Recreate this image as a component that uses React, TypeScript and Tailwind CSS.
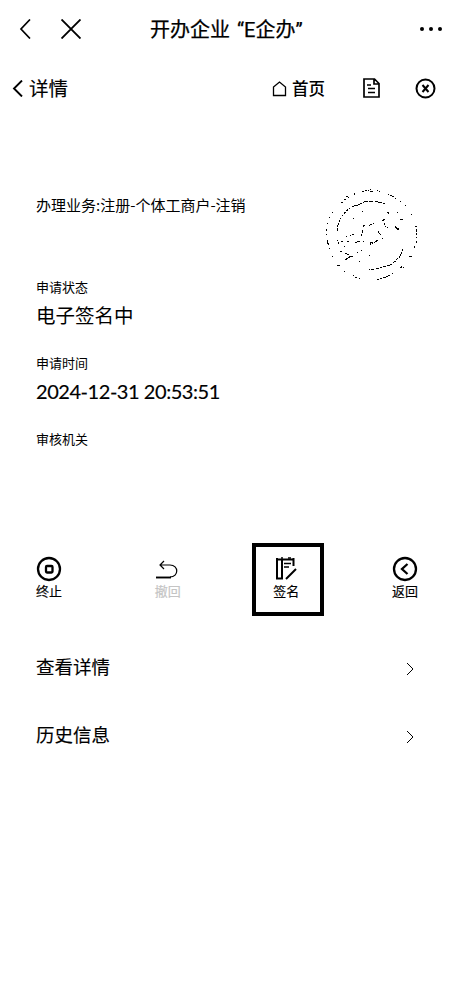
import React from "react";

const stroke = { fill: "none", stroke: "currentColor" } as const;

// The worn registration stamp: broken rings around a faint outline.
function Seal() {
  return (
    <svg width="94" height="94" viewBox="42 36 282 282" {...stroke} strokeWidth="3" shapeRendering="crispEdges">
      <path d="M156 49H161M164 47H171M174 46H177M179 48H189M181 43H184M202 46H205M207 49H211M132 54V60M109 65H115M114 68H118M102 74H108M93 82H98M234 58H237M239 60H246M246 63H252M256 70V73M269 79H272M285 91H288M304 118H307M66 112H69M57 126V129M51 143V146M48 161V167M48 178V181M51 195V207M54 204V210M57 219V222M66 243H70M81 271H90M102 290H105M129 301V304M134 306H141M147 310H150M316 153H322M318 163V170M318 174V181M318 186V189M318 198V204M314 213V219M297 244H306M271 279L276 275M279 277H283M246 295H249M201 313H206M210 310H216M219 307H228M229 303H235M234 300H240" />
      <path d="M82 167V159M82 155V151M85 149V143M88 140V135M91 133L94 128M98 123V119M101 116L106 111M109 108L115 103M117 101H121M126 95H132M132 92H143M145 89H149M149 86H156M158 82H162M162 79H174M178 79H189M194 79H203M205 82H215M218 84H225M278 221V228M274 231V236M271 236V244M267 243V249M263 250L258 255M256 258L249 264M247 266L241 270M240 272H231M228 275H219M216 278H209M207 281H197M193 284H184M181 283H177" />
      <path d="M156 108H159M129 130H132M160 150V155M163 152H166M157 165V173M154 178V184M176 151H180M181 148H187M188 145H192M217 136H222M220 132H224M222 145V149M225 152V156M231 157H234M231 112H237M234 116H238M261 112H264M271 133H279M255 153L262 164M261 160H267M261 164H267M204 169L212 180M215 190H219M205 195L193 202M190 202H181M181 205L184 211M185 208L190 205M160 197V201M145 200H149M135 202H142M142 199H146M126 179H132M120 181H124M108 184H111M81 196H85M84 201V207M94 199H99M111 199H117M102 214H105M90 229H96M106 235H110M112 238H117M117 244H129M115 247H119M105 253H110M109 250H114M141 232H144M153 226H156M178 241H181M147 260H150" />
    </svg>
  );
}

export default function App() {
  return (
    <main className="h-[985px] w-[454px] overflow-hidden bg-white font-['Noto_Sans_CJK_SC',sans-serif] text-black">
      <header className="flex h-[58px] items-center pl-[19px] pr-[12px]">
        <svg width="12" height="20" viewBox="0 0 12 20" {...stroke} strokeWidth="1.7"><path d="M11 .5L2 10L11 19.5" /></svg>
        <svg className="ml-[30px]" width="20" height="20" viewBox="0 0 20 20" {...stroke} strokeWidth="1.9"><path d="M.5.5L19.5 19.5M19.5.5L.5 19.5" /></svg>
        <h1 className="ml-[69px] mt-[2px] w-[160px] whitespace-nowrap font-['Roboto','Noto_Sans_CJK_SC',sans-serif] text-[20px] leading-[28px] [word-spacing:2px] [-webkit-text-stroke:0.25px]">开办企业 “E企办”</h1>
        <svg className="ml-auto" width="22" height="6" viewBox="0 0 22 6"><circle cx="2" cy="3" r="2" /><circle cx="11" cy="3" r="2" /><circle cx="20" cy="3" r="2" /></svg>
      </header>
      <nav className="flex h-[60px] items-center pl-[12px] pr-[18px]">
        <svg width="11" height="17" viewBox="0 0 11 17" {...stroke} strokeWidth="1.9"><path d="M10 .5L2 8.5L10 16.5" /></svg>
        <span className="ml-[6px] w-[40px] whitespace-nowrap text-[19.5px] leading-[28px] [-webkit-text-stroke:0.15px]">详情</span>
        <svg className="ml-[203px] mt-px" width="15" height="16" viewBox="0 0 15 16" {...stroke} strokeWidth="1.3"><path d="M1.5 6L7.5 1L13.5 6V14.5H1.5Z" /></svg>
        <span className="ml-[5px] w-[34px] whitespace-nowrap text-[16.5px] font-medium leading-[24px]">首页</span>
        <svg className="ml-[37px] -mt-px" width="18" height="20" viewBox="0 0 18 20" {...stroke} strokeWidth="1.7"><path d="M1 1H11.5L16 5.5V19H1ZM11 1V6H16M4 7H8M5 10.5H12M5 14.5H12" /></svg>
        <svg className="ml-auto mt-px" width="21" height="21" viewBox="0 0 21 21" {...stroke} strokeWidth="2"><circle cx="10.5" cy="10.5" r="9" /><path d="M7.5 7L13.5 14M13.5 7L7.5 14" /></svg>
      </nav>
      <section className="h-[425px] pl-[36px]">
        <div className="flex justify-between pr-[36px]">
          <p className="mt-[76px] whitespace-nowrap text-[15px] leading-[22px]">办理业务:注册-个体工商户-注销</p>
          <div className="mt-[69px] h-[94px] w-[94px]"><Seal /></div>
        </div>
        <dl className="mt-[-4px]">
          <dt className="h-[20px] text-[13px] leading-[20px]">申请状态</dt>
          <dd className="h-[56px] pt-[4px] text-[19.5px] leading-[28px]">电子签名中</dd>
          <dt className="h-[20px] text-[13px] leading-[20px]">申请时间</dt>
          <dd className="h-[56px] pt-[4px] font-['Lato','Noto_Sans_CJK_SC',sans-serif] text-[20px] leading-[28px] tracking-[-0.45px] [-webkit-text-stroke:0.15px]">2024-12-31 20:53:51</dd>
          <dt className="h-[20px] text-[13px] leading-[20px]">审核机关</dt>
        </dl>
      </section>
      <section className="flex h-[75px] items-start justify-between px-[13px]">
        <Action label="终止"><circle cx="13" cy="13" r="11" strokeWidth="2.3" /><rect x="10" y="10" width="6.5" height="6.5" rx="1" strokeWidth="2.3" /></Action>
        <Action label="撤回" faded><path d="M9 5L5 9L9 13M5 9H15C24 9 24 21 15 21" strokeWidth="1.2" /><path d="M1 21.5H16" strokeWidth="1.9" /></Action>
        <Action label="签名" boxed><path d="M3 3.5H21M4 2V22.5H9V3M20.5 2V10" strokeWidth="2" /><path d="M11 7.5H18M11 11H16M8 2H10M15 2H18" strokeWidth="1.6" /><path d="M13 23L23 13" strokeWidth="2" /></Action>
        <Action label="返回"><circle cx="13" cy="13" r="11" strokeWidth="2.3" /><path d="M15.5 8L10 13L15.5 18" strokeWidth="2.3" /></Action>
      </section>
      <section className="pt-[15px] text-[18.5px]">
        {["查看详情", "历史信息"].map((label) => (
          <div key={label} className="flex h-[68px] items-center justify-between pl-[36px] pr-[40px]">
            <span className="-translate-y-px leading-[28px] [-webkit-text-stroke:0.15px]">{label}</span>
            <svg className="mt-[3px]" width="8" height="14" viewBox="0 0 8 14" {...stroke} strokeWidth="1"><path d="M1 1L7 7L1 13" /></svg>
          </div>
        ))}
      </section>
    </main>
  );
}

function Action({ children, label, faded = false, boxed = false }: { children: React.ReactNode; label: string; faded?: boolean; boxed?: boolean }) {
  return (
    <div className={`flex h-[73px] w-[72px] flex-col items-center [-webkit-text-stroke:0.15px] ${boxed ? "translate-x-[2px] border-4 border-black pt-[9px]" : "pt-[13px]"}`}>
      <svg className={`shrink-0 ${boxed ? "-ml-[5px]" : ""}`} width="26" height="26" viewBox="0 0 26 26" {...stroke}>{children}</svg>
      <span className={`-mt-px whitespace-nowrap text-[13px] leading-[20px] ${boxed ? "-translate-x-[2px]" : ""} ${faded ? "text-[#c4c4c4]" : ""}`}>{label}</span>
    </div>
  );
}
